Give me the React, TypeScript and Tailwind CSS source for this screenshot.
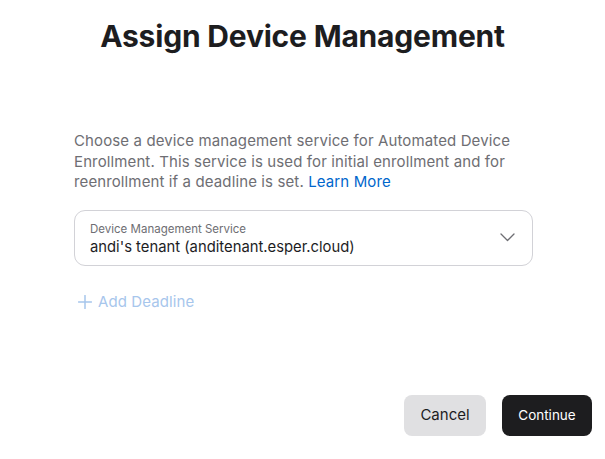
import React from "react";

export default function App() {
  return (
    <div className="w-[605px] h-[459px] bg-white flex flex-col text-[#1d1d1f]" style={{ fontFamily: "Inter, 'Noto Sans', sans-serif" }}>
      <h1 className="text-center text-[30px] font-bold leading-[36px] pt-[18px] tracking-[-0.2px]">Assign Device Management</h1>
      <div className="pl-[74px] pr-[70px] pt-[77px]">
        <p className="text-[15px] leading-[20.5px] tracking-[0.12px] text-[#6e6e73]">
          Choose a device management service for Automated Device Enrollment. This service is used for initial enrollment and for reenrollment if a deadline is set. <span className="text-[#0066cc]">Learn More</span>
        </p>
        <div className="mt-[17px] mr-[2px] h-[56px] border border-[#d2d2d7] rounded-[11px] flex items-center pl-[15px] pr-[17px]">
          <div className="flex-1 flex flex-col pt-[4px]">
            <span className="text-[11.5px] leading-[15px] text-[#6e6e73]">Device Management Service</span>
            <span className="text-[14.8px] leading-[21px] text-[#1d1d1f]">andi's tenant (anditenant.esper.cloud)</span>
          </div>
          <svg width="15" height="9" viewBox="0 0 15 9" fill="none" className="mb-[1px]">
            <path d="M1 1 L7.5 7.5 L14 1" stroke="#6e6e73" strokeWidth="1.3" strokeLinecap="round" strokeLinejoin="round" />
          </svg>
        </div>
        <div className="mt-[26px] flex items-center gap-[6px] pl-[4px] text-[#a7c6ec] text-[15px] leading-[20px] tracking-[0.1px]">
          <svg width="14" height="14" viewBox="0 0 14 14">
            <path d="M7 0.5 V13.5 M0.5 7 H13.5" stroke="#a7c6ec" strokeWidth="1.5" strokeLinecap="round" />
          </svg>
          <span>Add Deadline</span>
        </div>
      </div>
      <div className="mt-auto mb-[23px] flex justify-end gap-[16px] pr-[13px]">
        <button className="h-[41px] w-[82px] rounded-[8px] bg-[#e0e0e2] text-[15px] text-[#1d1d1f]">Cancel</button>
        <button className="h-[41px] w-[90px] rounded-[8px] bg-[#1d1d1f] text-[13.5px] text-white">Continue</button>
      </div>
    </div>
  );
}
